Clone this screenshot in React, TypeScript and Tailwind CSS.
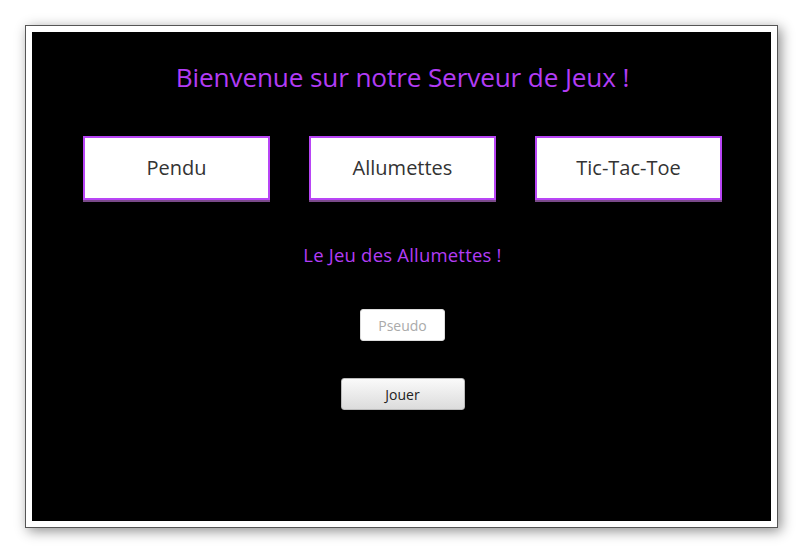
import React from "react";

export default function App() {
  const font = { fontFamily: '"Segoe UI", "Open Sans", "Noto Sans", sans-serif' };
  return (
    <div className="w-[804px] h-[554px] bg-white flex items-start justify-start" style={font}>
      <div className="ml-[25px] mt-[25px] w-[753px] h-[503px] border border-[#555] bg-white p-[6px] shadow-[3px_3px_12px_rgba(0,0,0,0.45)]">
        <div className="w-full h-full bg-black flex flex-col items-center pl-[2px]">
          <h1 className="mt-[28px] text-[26.2px] leading-[34px] text-[#b23cf5] tracking-[-0.15px]">
            Bienvenue sur notre Serveur de Jeux !
          </h1>
          <div className="mt-[42px] flex gap-[39px]">
            {["Pendu", "Allumettes", "Tic-Tac-Toe"].map((t) => (
              <button
                key={t}
                className="w-[187px] h-[64px] bg-white border-2 border-[#b845f5] text-[20px] text-[#333] shadow-[0_2px_0_#7a4a8a] flex items-center justify-center"
              >
                {t}
              </button>
            ))}
          </div>
          <div className="mt-[43px] text-[18.5px] leading-[24px] text-[#b23cf5] tracking-[0.2px]">Le Jeu des Allumettes !</div>
          <input
            placeholder="Pseudo"
            className="mt-[42px] w-[85px] h-[32px] rounded-[3px] bg-white border border-[#ddd] text-center text-[14px] text-[#333] placeholder:text-[#aaa] outline-none"
          />
          <button className="mt-[37px] w-[124px] h-[32px] rounded-[3px] border border-[#bbb] bg-gradient-to-b from-[#fafafa] to-[#dcdcdc] text-[14px] text-[#222]">
            Jouer
          </button>
        </div>
      </div>
    </div>
  );
}
